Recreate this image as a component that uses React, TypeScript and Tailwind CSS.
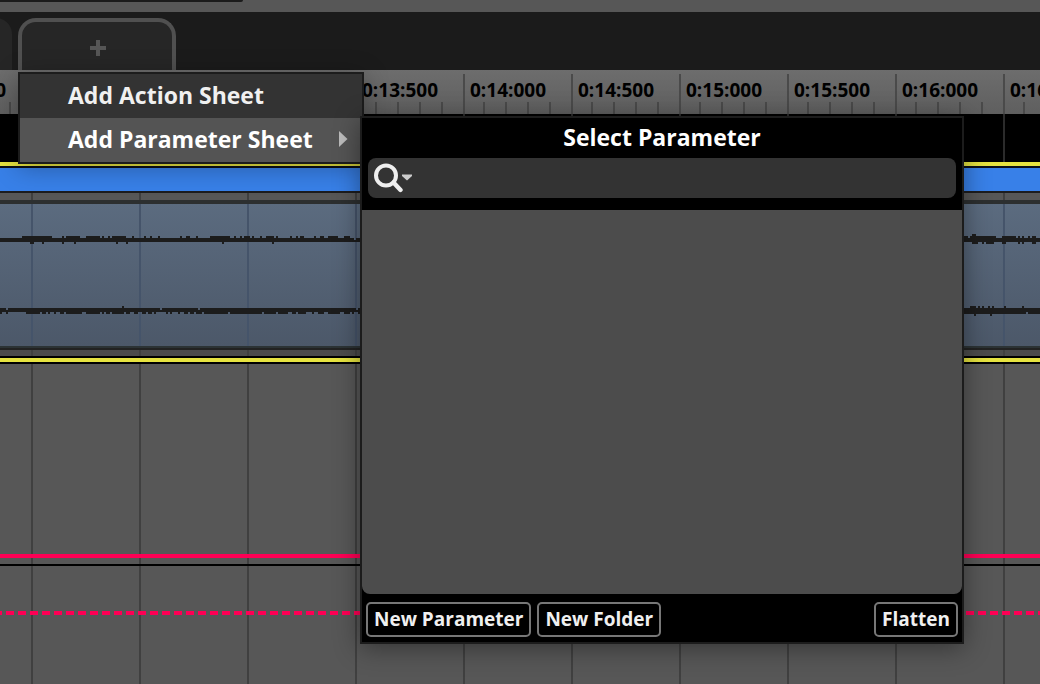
import React, { useState } from "react";
import clsx from "clsx";

const TIMES = [
  "0:11:500", "0:12:000", "0:12:500", "0:13:000", "0:13:500", "0:14:000",
  "0:14:500", "0:15:000", "0:15:500", "0:16:000", "0:16:500", "0:17:000",
  "0:17:500", "0:18:000", "0:18:500", "0:19:000", "0:19:500", "0:20:000",
];

type Span = [number, number];

// Peaks of each channel, as [start, end] along the clip.
const LEFT_UP: Span[] = [
  [22, 52], [62, 64], [66, 80], [86, 100], [102, 104], [108, 110], [112, 126], [132, 134],
  [144, 146], [150, 152], [158, 160], [180, 182], [186, 190], [196, 198], [210, 230],
  [234, 236], [240, 242], [244, 250], [252, 254], [260, 262], [266, 274], [276, 278],
  [290, 292], [296, 298], [300, 304], [314, 316], [320, 324], [328, 338], [344, 350],
  [964, 968], [970, 996], [1002, 1016], [1018, 1020], [1022, 1024], [1028, 1030], [1032, 1036],
];
const LEFT_DOWN: Span[] = [
  [30, 34], [42, 44], [62, 64], [74, 76], [116, 118], [126, 128], [222, 224], [272, 274],
  [972, 978], [982, 984], [986, 994], [1002, 1006], [1018, 1020], [1022, 1024], [1032, 1036],
];
const RIGHT_UP: Span[] = [
  [122, 124], [970, 976], [978, 980], [982, 984], [988, 990], [992, 994], [1004, 1006], [1022, 1024],
];
const RIGHT_DOWN: Span[] = [
  [0, 2], [6, 8], [26, 40], [42, 46], [48, 50], [54, 56], [60, 64], [66, 82], [86, 100],
  [102, 104], [106, 110], [112, 124], [126, 130], [134, 138], [142, 146], [148, 152],
  [154, 156], [166, 168], [170, 172], [178, 180], [184, 188], [190, 194], [196, 202],
  [204, 228], [230, 262], [264, 276], [278, 288], [292, 296], [298, 306], [312, 314],
  [318, 324], [328, 340], [344, 350], [352, 354], [358, 1026], [1028, 1040],
];
const RIGHT_CORE: Span[] = [[0, 6], [8, 160], [162, 198], [200, 356], [358, 4000]];

const bars = (spans: Span[], y: number, h = 2) =>
  spans.map(([a, b]) => `M${a} ${y}H${b}V${y + h}H${a}Z`).join("");

const WAVE =
  bars([[0, 354], [356, 4000]], 34) + bars([[0, 4000]], 36) +
  bars(LEFT_UP, 32) + bars([[972, 976]], 30) + bars(LEFT_DOWN, 38) +
  bars(RIGHT_CORE, 104) + bars([[0, 4000]], 106) +
  bars(RIGHT_UP, 102) + bars(RIGHT_DOWN, 108) + bars([[974, 976], [990, 992]], 110);

const GRID =
  "bg-[linear-gradient(to_right,#404040_2px,transparent_2px)] bg-[size:108px_100%] bg-[position:31px_0]";

function Ruler() {
  return (
    <div className="flex h-11 overflow-hidden bg-linear-to-b from-[#6d6d6d] to-[#5f5f5f] pt-1">
      <div className="-ml-[77px] flex">
        {TIMES.map((time) => (
          <div key={time} className="flex w-[108px] shrink-0 flex-col justify-between border-l-2 border-[#4a4a4a]">
            <span className="h-7 pl-[5px] text-[19px] leading-8 font-bold text-black">{time}</span>
            <div className="flex h-3 gap-5 pl-[18px]">
              <i className="w-0.5 bg-[#4a4a4a]" />
              <i className="w-0.5 bg-[#4a4a4a]" />
              <i className="w-0.5 bg-[#4a4a4a]" />
              <i className="w-0.5 bg-[#4a4a4a]" />
            </div>
          </div>
        ))}
      </div>
    </div>
  );
}

function AudioTrack() {
  return (
    <section aria-label="Audio track">
      <div className="h-12 bg-black bg-[linear-gradient(to_right,#2b2b2b_2px,transparent_2px)] bg-[size:108px_100%] bg-[position:31px_0]" />
      <div className="h-1 bg-[#e6e340]" />
      <div className="h-[27px] border-t-2 border-b-2 border-t-[#0b1017] border-b-[#1d1d1f] bg-[#3880e8]" />
      <div className={clsx("h-[7px] bg-[#575757]", GRID)} />
      <div className="h-1 bg-[#2c2f30]" />
      <div className="bg-[linear-gradient(to_right,#45546a_2px,transparent_2px),linear-gradient(to_bottom,#5b6b7f,#4c5869)] bg-[size:108px_100%,100%_100%] bg-[position:31px_0,0_0]">
        <svg className="block h-[142px] w-full" shapeRendering="crispEdges" aria-hidden="true">
          <path d={WAVE} fill="#1c1c1c" />
        </svg>
      </div>
      <div className="h-1 border-b-2 border-[#222222] bg-[#2c3335]" />
      <div className={clsx("h-1.5 bg-[#4b4b4b]", GRID)} />
      <div className="h-2 border-y-2 border-black bg-[#e6e340]" />
    </section>
  );
}

function ParameterPicker() {
  const [query, setQuery] = useState("");
  const button =
    "rounded-[5px] border-2 border-[#777777] bg-black px-1.5 text-[19px] leading-[31px] font-bold text-[#f0f0f0]";
  return (
    <div
      role="dialog"
      aria-label="Select Parameter"
      className="absolute -top-0.5 left-[340px] w-[604px] border-2 border-[#1c1c1c] bg-black shadow-[0_4px_24px_rgba(0,0,0,0.4)]"
    >
      <h2 className="text-center text-[23px] leading-[38px] font-bold text-white">Select Parameter</h2>
      <label className="mx-1.5 mt-0.5 mb-3 flex h-10 items-center rounded-lg bg-[#333333] pl-1.5">
        <svg width="40" height="30" viewBox="0 0 40 30" role="img" aria-label="Search parameters">
          <circle cx="12" cy="12.5" r="10" fill="none" stroke="#eeeeee" strokeWidth="4" />
          <path d="M19.5 19.5L26.5 27" stroke="#eeeeee" strokeWidth="4.4" strokeLinecap="round" />
          <path d="M28 11.5H38V13L33 17.5L28 13Z" fill="#cccccc" />
        </svg>
        <input
          type="text"
          value={query}
          onChange={(e) => setQuery(e.target.value)}
          className="h-full min-w-0 flex-1 bg-transparent px-2 text-[19px] text-white outline-none"
        />
      </label>
      <div className="h-96 rounded-b-lg bg-[#4c4c4c]" />
      <div className="flex gap-1.5 px-1 pt-2 pb-[5px]">
        <button type="button" className={button}>New Parameter</button>
        <button type="button" className={button}>New Folder</button>
        <button type="button" className={clsx(button, "ml-auto")}>Flatten</button>
      </div>
    </div>
  );
}

function SheetMenu() {
  return (
    <ul className="absolute top-full left-0 mt-0.5 w-[346px] border-2 border-[#1c1c1c] text-[23px] leading-[42px] font-bold shadow-[0_4px_24px_rgba(0,0,0,0.3)]">
      <li>
        <button type="button" className="block w-full bg-[#333333] pb-0.5 pl-12 text-left text-[#f0f0f0]">
          Add Action Sheet
        </button>
      </li>
      <li className="relative">
        <button
          type="button"
          className="flex w-full items-center justify-between bg-[#545454] pr-3.5 pb-0.5 pl-12 text-left text-white"
        >
          Add Parameter Sheet
          <svg width="9" height="16" viewBox="0 0 9 16" aria-hidden="true">
            <path d="M0 0L8.5 8L0 16Z" fill="#bbbbbb" />
          </svg>
        </button>
        <ParameterPicker />
      </li>
    </ul>
  );
}

export default function App() {
  return (
    <main className="flex min-h-screen flex-col overflow-x-hidden bg-[#575757] font-['Open_Sans','Noto_Sans',sans-serif]">
      <div className="h-3">
        <div className="h-0.5 w-[243px] rounded-br-sm bg-[#1b1b1b]" />
      </div>
      <nav className="relative z-10 flex h-[58px] gap-1.5 bg-[#1b1b1b] pt-1.5">
        <button
          type="button"
          aria-label="Current sheet"
          className="-ml-[146px] w-[158px] rounded-t-2xl bg-[#262626]"
        />
        <div className="relative w-[158px]">
          <button
            type="button"
            aria-label="Add sheet"
            className="flex h-full w-full items-center justify-center rounded-t-[18px] border-4 border-b-0 border-[#505050] bg-[#262626] pt-1 pl-0.5"
          >
            <svg width="16" height="16" viewBox="0 0 16 16" aria-hidden="true">
              <path d="M6 0H10V6H16V10H10V16H6V10H0V6H6Z" fill="#565656" />
            </svg>
          </button>
          <SheetMenu />
        </div>
      </nav>
      <Ruler />
      <AudioTrack />
      <section aria-label="Parameter tracks" className={clsx("flex flex-1 flex-col", GRID)}>
        <div className="flex h-[202px] flex-col justify-end border-b-2 border-black pb-1.5">
          <div className="h-1 bg-[#ff0055]" />
        </div>
        <div className="pt-[45px]">
          <div className="h-1 bg-[repeating-linear-gradient(to_right,#ff0055_0,#ff0055_8px,transparent_8px,transparent_12px)] bg-[position:-6px_0] bg-[size:1200px_100%]" />
        </div>
      </section>
    </main>
  );
}
